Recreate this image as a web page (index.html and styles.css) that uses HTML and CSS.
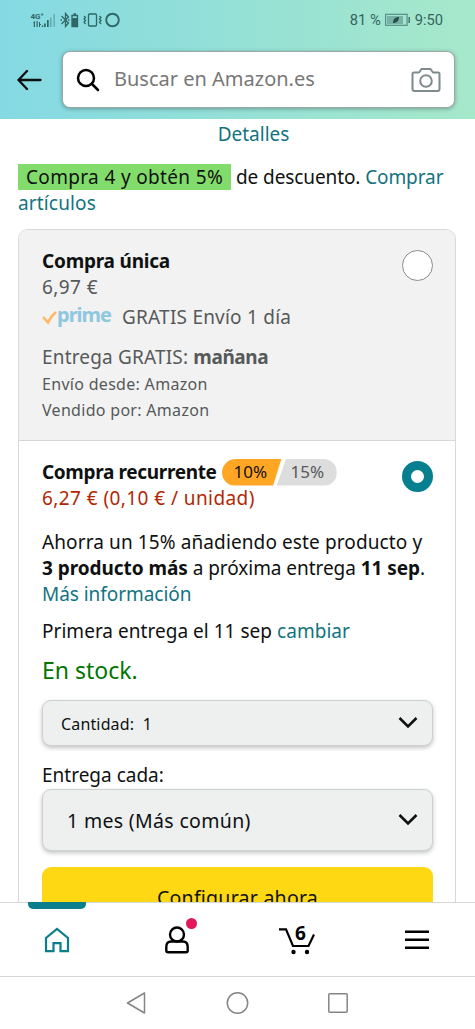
FILE: index.html
```html
<!DOCTYPE html>
<html lang="es">
<head>
<meta charset="utf-8">
<title>Amazon.es</title>
<link rel="stylesheet" href="styles.css">
</head>
<body>
<div class="screen">
  <header class="top">
    <div class="status">
      <svg class="status-icons" width="92" height="20" viewBox="0 0 92 20">
        <text class="net" x="0.500" y="8.500">4G⁺</text>
        <g fill="#2f6666"><path d="M3 12.500l2-1.500v6H3.800v-4zM6.500 11h1.200v6H6.500zM9 12h1v2h1v1h-1v2H9zM11.800 15.500h1.400V17h-1.400zM14 13.500h1.700V17H14zM17 10h1.700v7H17z"/><path d="M20 7.500h1.500V17H20zM23.500 4h1.300v13h-1.300z" opacity=".45"/></g>
        <g fill="none" stroke="#2f6666" stroke-width="1.300"><path d="M31.500 6l7 7-3 3.500V3.500l3 3.500-7 7M30.500 10h1.500M38 10h1.500"/><path d="M42 5.500h5.500v11H42zM43.500 4h2.500"/><rect x="58.500" y="4" width="8" height="12" rx="1"/><path d="M54 6l1.500 1.500L54 9l1.500 1.500L54 12l1.500 2M69.500 6L71 7.500 69.500 9l1.500 1.500-1.500 1.500 1.500 2"/><circle cx="82.500" cy="10" r="6.300" stroke-width="1.900"/></g>
        <path d="M42 8h5.500v8H42z" fill="#2f6666"/>
      </svg>
      <div class="status-right"><span>81 %</span>
        <svg width="26" height="14" viewBox="0 0 26 14"><rect x=".6" y="1.300" width="21.500" height="11" fill="none" stroke="#588d84" stroke-width="1.200"/><path d="M2 3h16v8H2z" fill="#76b2a5"/><path d="M8 10c0-4 2.500-6 6-6 0 3.500-2 6-6 6z" fill="#245047"/><path d="M23.500 4h1.500v6h-1.500z" fill="#3f7469"/></svg>
        <span class="clock">9:50</span></div>
    </div>
    <div class="search-row">
      <svg class="back" width="26" height="22" viewBox="0 0 26 22" fill="none" stroke="#0b0f10" stroke-width="2.300" stroke-linecap="round" stroke-linejoin="round"><path d="M10 2L1.500 11l8.500 9M1.500 11H23.500"/></svg>
      <div class="search">
        <svg width="24" height="24" viewBox="0 0 24 24" fill="none" stroke="#000" stroke-width="2.500" stroke-linecap="round"><circle cx="10" cy="10" r="8"/><path d="M16 16l6 6"/></svg>
        <span class="placeholder">Buscar en Amazon.es</span>
        <svg width="30" height="26" viewBox="0 0 30 26" fill="none" stroke="#7f8a8c" stroke-width="2" stroke-linejoin="round"><path d="M3 5.500h5L10.500 2h9L22 5.500h5q1.500 0 1.500 1.500v15q0 2-2 2h-23q-2 0-2-2V7Q1.500 5.500 3 5.500z"/><circle cx="15" cy="14" r="5.800"/></svg>
      </div>
    </div>
  </header>

  <main class="content">
    <div class="details link"><span>Detalles</span></div>
    <div class="promo">
      <div class="line"><span class="deal">Compra 4 y obtén 5%</span><span class="t-promo">de descuento. <span class="link">Comprar</span></span></div>
      <div class="line link"><span class="t-art">artículos</span></div>
    </div>

    <div class="card">
      <section class="once">
        <div class="line"><b class="t-once">Compra única</b></div>
        <div class="line grey"><span class="t-price">6,97 €</span></div>
        <div class="line grey prime-line">
          <svg width="15" height="16" viewBox="0 0 15 16" fill="none" stroke="#ffb865" stroke-width="2.600"><path d="M1 8l5 5.500Q9 7 14 3"/></svg>
          <b class="prime">prime</b><span class="t-free">GRATIS Envío 1 día</span>
        </div>
        <div class="line grey delivery"><span class="t-deliv">Entrega GRATIS: <b>mañana</b></span></div>
        <div class="line grey small"><span class="t-seller">Envío desde: Amazon</span></div>
        <div class="line grey small"><span class="t-seller">Vendido por: Amazon</span></div>
        <span class="radio"></span>
      </section>

      <section class="recurring">
        <div class="line head"><b class="t-rec">Compra recurrente</b>
          <span class="pill"><span class="ten">10%</span><span class="fifteen">15%</span></span></div>
        <div class="line red"><span class="t-price">6,27 € (0,10 € / unidad)</span></div>
        <div class="save">
          <div class="line"><span class="t-save">Ahorra un 15% añadiendo este producto y</span></div>
          <div class="line"><span class="t-more"><b>3 producto más</b> a próxima entrega <b>11 sep</b>.</span></div>
          <div class="line link"><span class="t-more">Más información</span></div>
        </div>
        <div class="line first"><span class="t-first">Primera entrega el 11 sep <span class="link">cambiar</span></span></div>
        <div class="line stock"><span>En stock.</span></div>
        <div class="select qty"><span class="t-qty">Cantidad:&nbsp; 1</span>
          <svg width="20" height="14" viewBox="0 0 20 14" fill="none" stroke="#0f1111" stroke-width="2.600"><path d="M1.500 2l8.500 8.500L18.500 2"/></svg></div>
        <div class="line every"><span>Entrega cada:</span></div>
        <div class="select month"><span class="t-month">1 mes (Más común)</span>
          <svg width="20" height="14" viewBox="0 0 20 14" fill="none" stroke="#0f1111" stroke-width="2.600"><path d="M1.500 2l8.500 8.500L18.500 2"/></svg></div>
        <div class="button"><span class="t-btn">Configurar ahora</span></div>
        <span class="radio on"></span>
      </section>
    </div>
  </main>

  <nav class="tabs">
    <div class="tab active"><svg width="26" height="26" viewBox="0 0 26 26" fill="none" stroke="#0b7f8c" stroke-width="2.200"><path d="M2 24.200V11L13 2l11 9v13.200h-7.500v-8h-7v8z"/></svg></div>
    <div class="tab"><svg width="26" height="28" viewBox="0 0 26 28" fill="none" stroke="#000" stroke-width="2.400"><circle cx="13" cy="8.500" r="7"/><path d="M7 15.500Q2.300 15.500 2.300 21v3.500q0 1.700 1.700 1.700h18q1.700 0 1.700-1.700V21q0-5.500-4.700-5.500z"/></svg><i class="dot"></i></div>
    <div class="tab"><svg class="cart" width="38" height="30" viewBox="0 0 38 30"><path d="M1 4.300h7l7 16.700h15.500l5.500-11.500" fill="none" stroke="#000" stroke-width="2.200"/><circle cx="15.500" cy="27" r="2.200"/><circle cx="29" cy="27" r="2.200"/><text class="count" x="22.500" y="15" text-anchor="middle">6</text></svg></div>
    <div class="tab menu"><svg width="24" height="20" viewBox="0 0 24 20"><path d="M0 .5h24v2.500H0zM0 8.500h24V11H0zM0 16.500h24V19H0z"/></svg></div>
  </nav>
  <footer class="system">
    <svg width="20" height="24" viewBox="0 0 20 24"><path d="M18.500 2v20L1.500 12z"/></svg>
    <svg width="24" height="24" viewBox="0 0 24 24"><circle cx="11.500" cy="12" r="10.200"/></svg>
    <svg class="square" width="20" height="20" viewBox="0 0 20 20"><rect x=".8" y=".8" width="18.400" height="18.400" rx="1"/></svg>
  </footer>
</div>
</body>
</html>
```
FILE: styles.css
```css
* { box-sizing: border-box; }
body { margin: 0; background: #fff; color: #0f1111; font: 19px/26px "Noto Sans", sans-serif; }
.screen { width: 475px; height: 1029px; display: flex; flex-direction: column; overflow: hidden; }
svg { flex: none; display: block; }
.top { height: 119px; flex: none; background: linear-gradient(90deg, #84d9e3, #a6e8ca); }
.status { height: 51px; padding: 10px 32px 0 30px; display: flex; justify-content: space-between; font: 14.7px/20px Roboto, sans-serif; color: #36635e; }
.net { font: bold 8px Roboto, sans-serif; fill: #2f6666; }
.status-right { display: flex; align-items: center; height: 20px; gap: 4px; }
.search-row { display: flex; align-items: center; padding-left: 17px; gap: 19px; }
.search { width: 393px; height: 57px; background: #fff; border: 1px solid #9aa9a6; border-radius: 8px; box-shadow: 0 1px 4px rgba(0,0,0,.3); display: flex; align-items: center; padding: 0 13px; }
.placeholder { flex: 1; margin-left: 14px; color: #777; font-size: 20px; padding-bottom: 1px; }
.content { flex: 1; min-height: 0; overflow: hidden; padding: 2px 19px 0 18px; }
.line { height: 26px; display: flex; align-items: center; white-space: nowrap; }
.link { color: #12737f; }
.details { text-align: center; padding-left: 33px; height: 26px; }
.promo { margin-top: 17px; }
.deal { background: #82dc6c; width: 213px; height: 26px; padding-left: 8px; margin-right: 5px; letter-spacing: .34px; }
.card { margin-top: 13px; border: 1px solid #d5d9d9; border-radius: 10px 10px 0 0; height: 800px; width: 438px; }
.once, .recurring { position: relative; padding-left: 23px; }
.once { height: 211px; background: #f2f2f2; border-bottom: 1px solid #d5d9d9; border-radius: 9px 9px 0 0; padding-top: 18px; }
.grey { color: #565959; }
.prime-line { margin-top: 4px; }
.prime { color: #8fc7df; font-size: 20px; line-height: 24px; margin-bottom: 4px; width: 65px; letter-spacing: -1px; }
.delivery { margin-top: 14px; margin-bottom: 1px; }
.small { font-size: 16px; }
.t-promo { letter-spacing: -.1px; }
.t-art { letter-spacing: .15px; }
.t-once { letter-spacing: -.22px; }
.t-price { letter-spacing: .42px; }
.t-free { letter-spacing: .22px; }
.t-deliv { letter-spacing: .17px; }
.t-deliv b { letter-spacing: -.4px; }
.t-seller { letter-spacing: .3px; }
.t-rec { letter-spacing: -.35px; }
.t-save { letter-spacing: .11px; }
.t-more { letter-spacing: -.05px; }
.t-first { letter-spacing: .03px; }
.t-qty { letter-spacing: .15px; padding-top: 2px; }
.t-month { letter-spacing: .33px; padding-top: 1px; }
.t-btn { letter-spacing: .25px; }
.t-month, .t-btn { font-size: 19.5px; }
.radio { position: absolute; left: 383px; top: 20px; width: 31px; height: 31px; border-radius: 50%; border: 1px solid #888c8c; background: #fff; }
.radio.on { border: 9.500px solid #077f8e; }
.recurring { padding-top: 18px; }
.pill { display: flex; width: 115px; height: 27px; margin-left: 5px; font-size: 17px; border-radius: 14px; overflow: hidden; }
.ten { width: 60px; padding-left: 12px; background: #ffa724; clip-path: polygon(0 0, 100% 0, 86% 100%, 0 100%); }
.fifteen { width: 60px; margin-left: -5px; padding-left: 14px; background: #ddd; color: #565959; clip-path: polygon(16% 0, 100% 0, 100% 100%, 0 100%); }
.red { color: #b12704; }
.save { margin-top: 18px; }
.first { margin-top: 11px; }
.stock { margin-top: 12px; color: #007600; font-size: 23px; height: 28px; }
.select { width: 391px; background: #eef0f0; border: 1px solid #cdd1d1; border-radius: 9px; box-shadow: 0 2px 4px rgba(15,17,17,.25); display: flex; align-items: center; justify-content: space-between; padding-right: 14px; }
.qty { height: 46px; margin-top: 16px; padding-left: 18px; font-size: 16px; }
.every { margin-top: 16px; }
.month { height: 62px; margin-top: 1px; padding-left: 24px; }
.button { width: 391px; height: 62px; margin-top: 16px; background: #ffd814; border-radius: 9px; display: flex; align-items: center; justify-content: center; }
.tabs { height: 74px; flex: none; border-top: 1px solid #d5d9d9; display: grid; grid-template-columns: 114px 126px 114px 121px; align-items: center; background: #fff; }
.tab { position: relative; display: flex; justify-content: center; align-items: center; height: 100%; }
.menu { padding-left: 5px; }
.active::before { content: ""; position: absolute; top: -1px; left: 28px; width: 58px; height: 7px; background: #0b7f8c; border-radius: 0 0 5px 5px; }
.dot { position: absolute; left: 72px; top: 15px; width: 11px; height: 11px; border-radius: 50%; background: #e2175e; }
.cart { overflow: visible; }
.count { font: bold 19px "Noto Sans", sans-serif; }
.system { height: 53px; flex: none; border-top: 1px solid #d5d9d9; display: flex; align-items: center; padding-left: 126px; gap: 80px; background: #fff; }
.square { margin-left: -2px; }
.system svg { fill: none; stroke: #858585; stroke-width: 1.500; stroke-linejoin: round; }
```
